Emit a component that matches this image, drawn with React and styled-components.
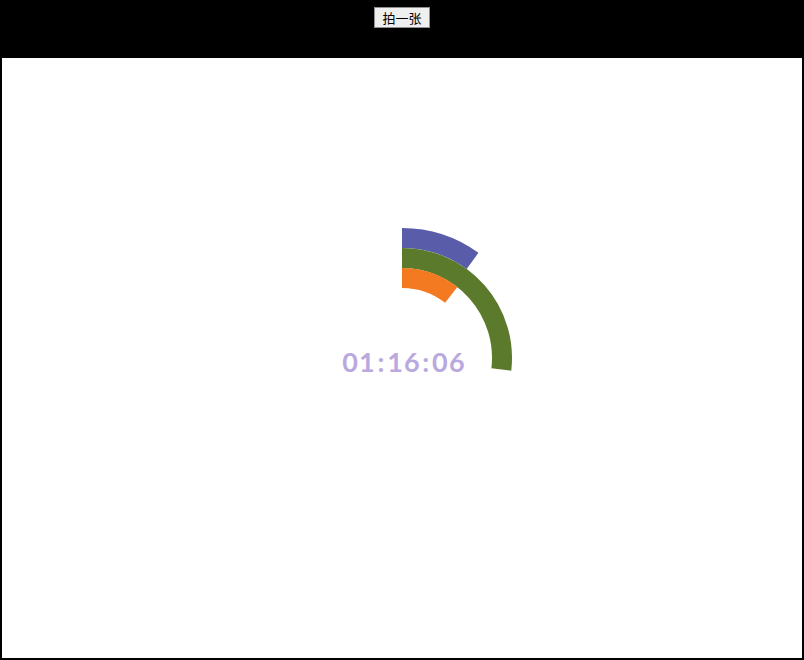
import React from "react";
import styled, { createGlobalStyle } from "styled-components";

const GlobalStyle = createGlobalStyle`
  html, body {
    margin: 0;
    padding: 0;
    background: #000;
  }
`;

const Page = styled.div`
  display: flex;
  flex-direction: column;
  align-items: center;
  padding-top: 7px;
`;

const ShotButton = styled.button`
  height: 21px;
  padding: 0 7px;
  font-family: "Noto Sans CJK SC", "DejaVu Sans", sans-serif;
  font-size: 13px;
  line-height: 19px;
  color: #000;
  background: #efefef;
  border: 1px solid #8f8f8f;
  border-radius: 0;
`;

const Stage = styled.div`
  margin-top: 30px;
  width: 800px;
  height: 600px;
  background: #fff;
`;

const Clock = styled.svg`
  display: block;
`;

const TimeText = styled.text`
  font-family: Lato, "Open Sans", sans-serif;
  font-weight: 700;
  font-size: 27px;
  letter-spacing: 1.2px;
  fill: #baa9de;
`;

const cx = 400;
const cy = 300;

function arcPath(r, deg) {
  const a = ((deg - 90) * Math.PI) / 180;
  const x = cx + r * Math.cos(a);
  const y = cy + r * Math.sin(a);
  const large = deg > 180 ? 1 : 0;
  return `M ${cx} ${cy - r} A ${r} ${r} 0 ${large} 1 ${x} ${y}`;
}

const h = 1;
const m = 16;
const s = 6;

const rings = [
  { r: 120, deg: (s / 60) * 360, color: "#585ca9" },
  { r: 100, deg: ((m + s / 60) / 60) * 360, color: "#5b7a2b" },
  { r: 80, deg: (((h % 12) + m / 60) / 12) * 360, color: "#f47a21" },
];

const pad = (n) => String(n).padStart(2, "0");

export default function App() {
  const parts = [pad(h), pad(m), pad(s)];
  return (
    <>
      <GlobalStyle />
      <Page>
        <ShotButton>拍一张</ShotButton>
        <Stage>
          <Clock width="800" height="600" viewBox="0 0 800 600">
            {rings.map((ring, i) => (
              <path
                key={i}
                d={arcPath(ring.r, ring.deg)}
                fill="none"
                stroke={ring.color}
                strokeWidth="20"
              />
            ))}
            <TimeText x={cx + 2} y={314} textAnchor="middle">
              {parts.map((p, i) => (
                <React.Fragment key={i}>
                  {i > 0 && <tspan dx="1.5">:</tspan>}
                  <tspan dx={i > 0 ? "1.5" : "0"}>{p}</tspan>
                </React.Fragment>
              ))}
            </TimeText>
          </Clock>
        </Stage>
      </Page>
    </>
  );
}
